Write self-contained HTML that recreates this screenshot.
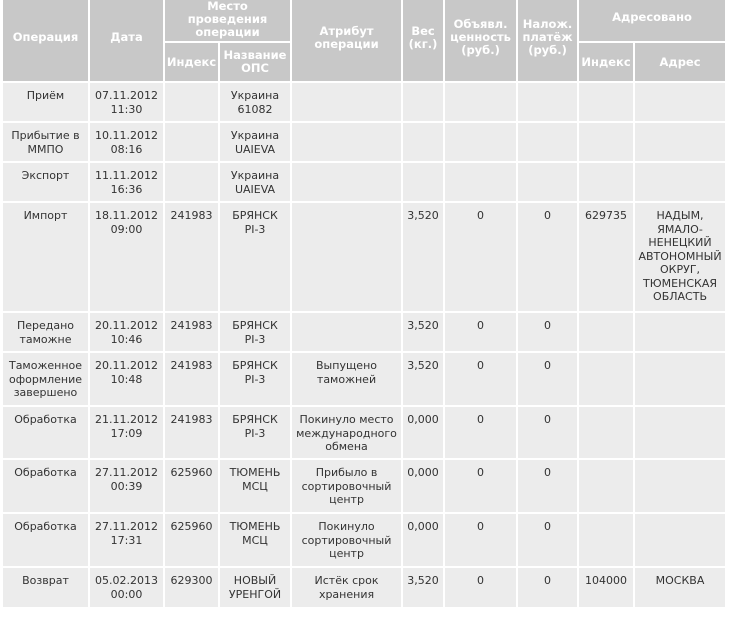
<!DOCTYPE html>
<html><head><meta charset="utf-8"><style>
html,body{margin:0;padding:0;background:#fff;width:740px;height:617px;overflow:hidden;position:relative}
table{position:absolute;left:1px;top:-8px;border-collapse:separate;border-spacing:2px;table-layout:fixed;width:726px;font-family:"DejaVu Sans","Liberation Sans",sans-serif;font-size:11px;line-height:13.5px;color:#333}
td,th{padding:0;text-align:center;overflow:hidden;white-space:nowrap}
th{background:#c8c8c8;color:#fff;font-weight:bold;vertical-align:middle;font-size:11.5px;line-height:13px}
td{background:#ececec;vertical-align:top;padding-top:6px;box-sizing:border-box}
</style></head><body>
<table>
<colgroup><col style="width:85px"><col style="width:73px"><col style="width:53px"><col style="width:70px"><col style="width:109px"><col style="width:40px"><col style="width:71px"><col style="width:59px"><col style="width:54px"><col style="width:90px"></colgroup>
<tr style="height:47px"><th rowspan="2">Операция</th><th rowspan="2">Дата</th><th colspan="2" style="padding-top:3px">Место<br>проведения<br>операции</th><th rowspan="2">Атрибут<br>операции</th><th rowspan="2">Вес<br>(кг.)</th><th rowspan="2">Объявл.<br>ценность<br>(руб.)</th><th rowspan="2">Налож.<br>платёж<br>(руб.)</th><th colspan="2">Адресовано</th></tr>
<tr style="height:38px"><th>Индекс</th><th>Название<br>ОПС</th><th>Индекс</th><th>Адрес</th></tr>
<tr style="height:38px"><td>Приём</td><td>07.11.2012<br>11:30</td><td></td><td>Украина<br>61082</td><td></td><td></td><td></td><td></td><td></td><td></td></tr>
<tr style="height:38px"><td>Прибытие в<br>ММПО</td><td>10.11.2012<br>08:16</td><td></td><td>Украина<br>UAIEVA</td><td></td><td></td><td></td><td></td><td></td><td></td></tr>
<tr style="height:38px"><td>Экспорт</td><td>11.11.2012<br>16:36</td><td></td><td>Украина<br>UAIEVA</td><td></td><td></td><td></td><td></td><td></td><td></td></tr>
<tr style="height:108px"><td>Импорт</td><td>18.11.2012<br>09:00</td><td>241983</td><td>БРЯНСК<br>PI-3</td><td></td><td>3,520</td><td>0</td><td>0</td><td>629735</td><td>НАДЫМ,<br>ЯМАЛО-<br>НЕНЕЦКИЙ<br>АВТОНОМНЫЙ<br>ОКРУГ,<br>ТЮМЕНСКАЯ<br>ОБЛАСТЬ</td></tr>
<tr style="height:38px"><td>Передано<br>таможне</td><td>20.11.2012<br>10:46</td><td>241983</td><td>БРЯНСК<br>PI-3</td><td></td><td>3,520</td><td>0</td><td>0</td><td></td><td></td></tr>
<tr style="height:52px"><td>Таможенное<br>оформление<br>завершено</td><td>20.11.2012<br>10:48</td><td>241983</td><td>БРЯНСК<br>PI-3</td><td>Выпущено<br>таможней</td><td>3,520</td><td>0</td><td>0</td><td></td><td></td></tr>
<tr style="height:51px"><td>Обработка</td><td>21.11.2012<br>17:09</td><td>241983</td><td>БРЯНСК<br>PI-3</td><td>Покинуло место<br>международного<br>обмена</td><td>0,000</td><td>0</td><td>0</td><td></td><td></td></tr>
<tr style="height:52px"><td>Обработка</td><td>27.11.2012<br>00:39</td><td>625960</td><td>ТЮМЕНЬ<br>МСЦ</td><td>Прибыло в<br>сортировочный<br>центр</td><td>0,000</td><td>0</td><td>0</td><td></td><td></td></tr>
<tr style="height:52px"><td>Обработка</td><td>27.11.2012<br>17:31</td><td>625960</td><td>ТЮМЕНЬ<br>МСЦ</td><td>Покинуло<br>сортировочный<br>центр</td><td>0,000</td><td>0</td><td>0</td><td></td><td></td></tr>
<tr style="height:39px"><td>Возврат</td><td>05.02.2013<br>00:00</td><td>629300</td><td>НОВЫЙ<br>УРЕНГОЙ</td><td>Истёк срок<br>хранения</td><td>3,520</td><td>0</td><td>0</td><td>104000</td><td>МОСКВА</td></tr>
</table>
</body></html>
